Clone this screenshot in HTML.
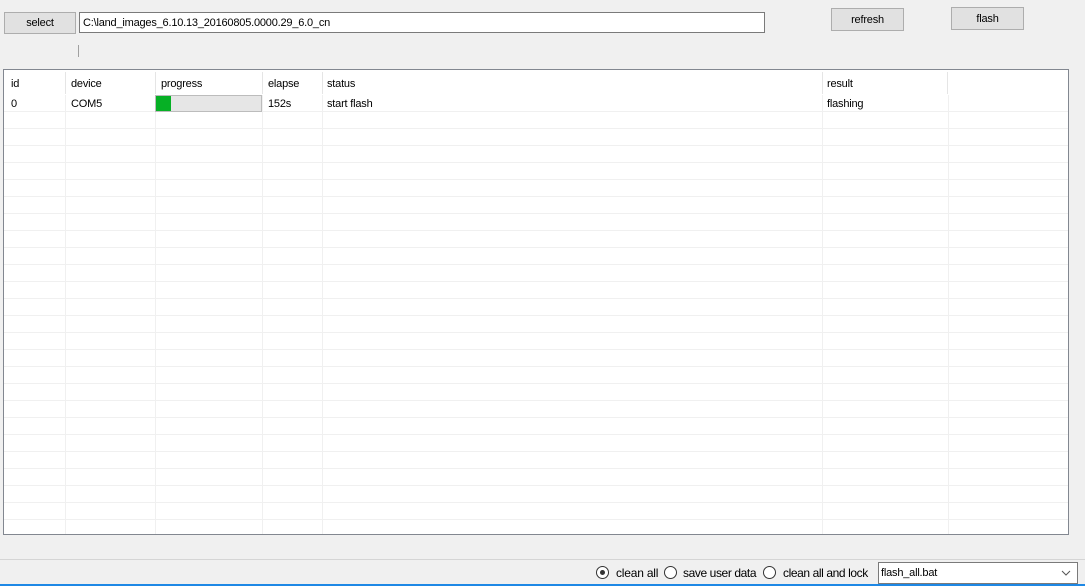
<!DOCTYPE html>
<html><head><meta charset="utf-8"><style>
*{margin:0;padding:0;box-sizing:border-box}
body{width:1085px;height:586px;background:#f0f0f0;font-family:"Liberation Sans",Arial,sans-serif;font-size:11px;letter-spacing:-0.2px;color:#000;position:relative;overflow:hidden}
.a{position:absolute}
.btn{position:absolute;background:#e1e1e1;border:1px solid #adadad;text-align:center}
.tbl{position:absolute;left:3px;top:69px;width:1066px;height:466px;border:1px solid #828790;background:#fff;overflow:hidden}
.rows{position:absolute;left:0;top:41px;right:0;bottom:0;background:repeating-linear-gradient(to bottom,#f0f0f0 0,#f0f0f0 1px,transparent 1px,transparent 17px)}
.v{position:absolute;top:25px;bottom:0;width:1px;background:#f0f0f0}
.hv{position:absolute;top:2px;height:22px;width:1px;background:#e5e5e5}
.t{position:absolute;white-space:nowrap}
.radio{position:absolute;width:13px;height:13px;border:1px solid #333;border-radius:50%;background:#fff}
</style></head><body>
<div class="btn" style="left:4px;top:12px;width:72px;height:22px;line-height:21px">select</div>
<div class="a" style="left:79px;top:12px;width:686px;height:21px;background:#fff;border:1px solid #7a7a7a;padding:3px 3px;line-height:14px">C:\land_images_6.10.13_20160805.0000.29_6.0_cn</div>
<div class="btn" style="left:831px;top:8px;width:73px;height:23px;line-height:22px">refresh</div>
<div class="btn" style="left:951px;top:7px;width:73px;height:23px;line-height:22px">flash</div>
<div class="a" style="left:78px;top:45px;width:1px;height:12px;background:#a0a0a0"></div>
<div class="tbl">
 <div class="rows"></div>
 <div class="hv" style="left:61px"></div><div class="hv" style="left:151px"></div><div class="hv" style="left:258px"></div><div class="hv" style="left:318px"></div><div class="hv" style="left:818px"></div><div class="hv" style="left:943px"></div>
 <div class="v" style="left:61px"></div><div class="v" style="left:151px"></div><div class="v" style="left:258px"></div><div class="v" style="left:318px"></div><div class="v" style="left:818px"></div><div class="v" style="left:944px"></div>
 <div class="t" style="left:7px;top:8px">id</div>
 <div class="t" style="left:67px;top:8px">device</div>
 <div class="t" style="left:157px;top:8px">progress</div>
 <div class="t" style="left:264px;top:8px">elapse</div>
 <div class="t" style="left:323px;top:8px">status</div>
 <div class="t" style="left:823px;top:8px">result</div>
 <div class="t" style="left:7px;top:28px">0</div>
 <div class="t" style="left:67px;top:28px">COM5</div>
 <div class="a" style="left:151px;top:25px;width:107px;height:17px;background:#e6e6e6;border:1px solid #bcbcbc"><div style="width:15px;height:15px;background:#06b025"></div></div>
 <div class="t" style="left:264px;top:28px">152s</div>
 <div class="t" style="left:323px;top:28px">start flash</div>
 <div class="t" style="left:823px;top:28px">flashing</div>
</div>
<div class="a" style="left:0;top:559px;width:1085px;height:1px;background:#d5d5d5"></div>
<div class="radio" style="left:596px;top:566px"><div style="position:absolute;left:3px;top:3px;width:5px;height:5px;border-radius:50%;background:#333"></div></div>
<div class="t" style="left:616px;top:566px;font-size:12px">clean all</div>
<div class="radio" style="left:664px;top:566px"></div>
<div class="t" style="left:683px;top:566px;font-size:12px;letter-spacing:-0.4px">save user data</div>
<div class="radio" style="left:763px;top:566px"></div>
<div class="t" style="left:783px;top:566px;font-size:12px;letter-spacing:-0.4px">clean all and lock</div>
<div class="a" style="left:878px;top:562px;width:200px;height:22px;background:#fff;border:1px solid #7a7a7a;padding:4px 2px;line-height:13px">flash_all.bat
 <svg style="position:absolute;right:6px;top:7px" width="10" height="6"><path d="M1 1 L5 5 L9 1" fill="none" stroke="#555" stroke-width="1"/></svg></div>
<div class="a" style="left:0;top:584px;width:1085px;height:2px;background:#1e88e5"></div>
</body></html>
